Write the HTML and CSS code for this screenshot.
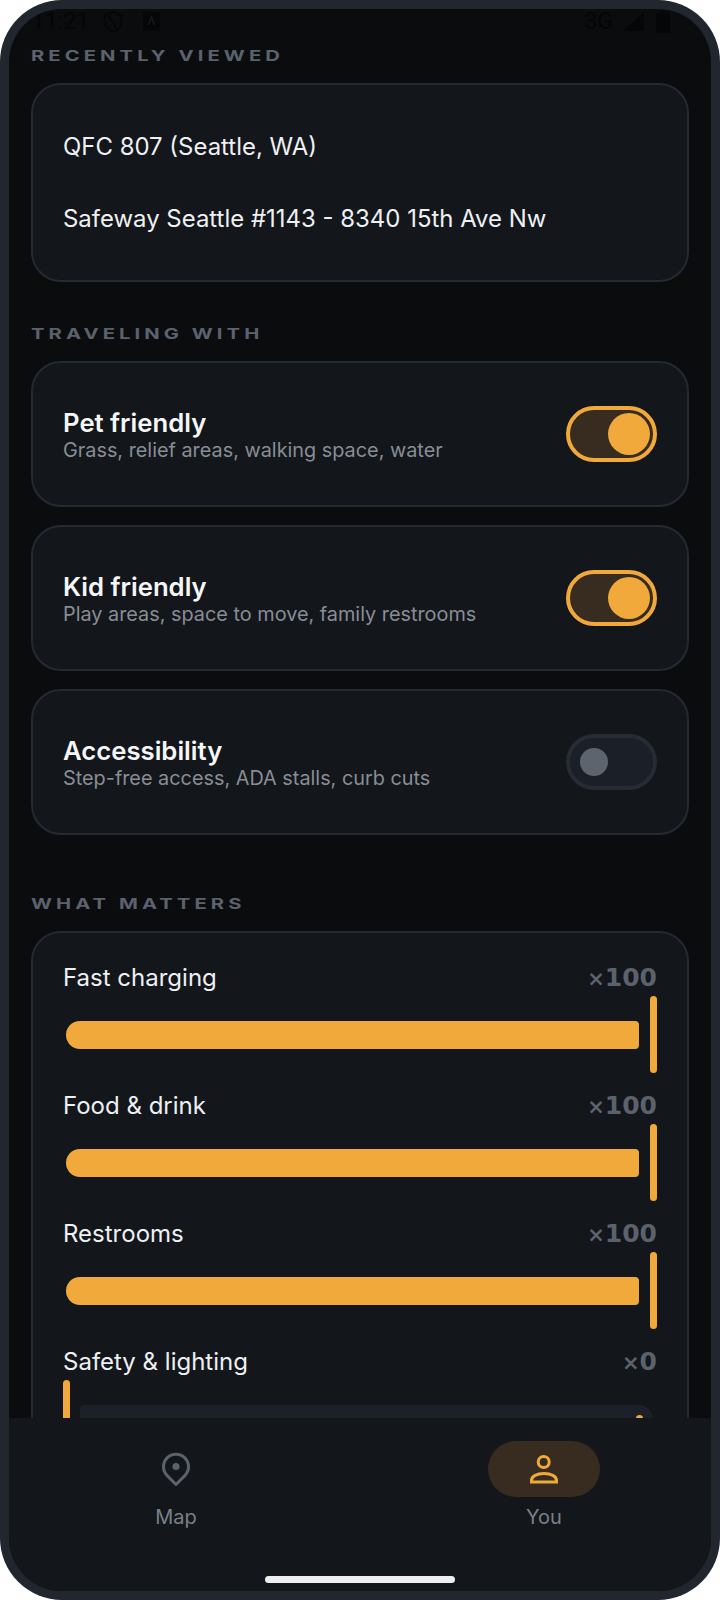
FILE: index.html
```html
<!DOCTYPE html>
<html lang="en">
<head>
  <meta charset="UTF-8">
  <title>You</title>
  <link rel="stylesheet" href="styles.css">
</head>
<body>
  <div class="phone">
    <div class="screen">
      <div class="status">
        <div class="status-left">
          <span>11:21</span>
          <svg width="20" height="22" viewBox="0 0 20 22" fill="none" stroke="#050607" stroke-width="1.6"><path d="M10 1 L18.5 4 V11 C18.5 15.5 14.5 19 10 21 C5.5 19 1.5 15.5 1.5 11 V4 Z"/><path d="M7 4 C4 9 15 11 11 17"/></svg>
          <svg class="status-gap" width="17" height="19" viewBox="0 0 17 19"><rect width="17" height="19" rx="1.5" fill="#050607"/><path d="M8.5 3 L12.5 13 H10.7 L8.5 7.5 L6.3 13 H4.5 Z" fill="#16181b"/></svg>
        </div>
        <div class="status-right">
          <span>3G</span>
          <svg width="21" height="19" viewBox="0 0 21 19"><path d="M21 0 V19 H0 Z" fill="#050607"/></svg>
          <svg class="status-gap" width="14" height="22" viewBox="0 0 14 22"><path d="M4 0 H10 V2 H14 V22 H0 V2 H4 Z" fill="#050607"/></svg>
        </div>
      </div>

      <div class="content">
        <h3 class="section first">RECENTLY VIEWED</h3>
        <div class="card recent">
          <div class="recent-item">QFC 807 (Seattle, WA)</div>
          <div class="recent-item">Safeway Seattle #1143 - 8340 15th Ave Nw</div>
        </div>

        <h3 class="section">TRAVELING WITH</h3>
        <div class="card option">
          <div>
            <div class="option-title">Pet friendly</div>
            <div class="option-sub">Grass, relief areas, walking space, water</div>
          </div>
          <div class="toggle on"><div class="knob"></div></div>
        </div>
        <div class="card option">
          <div>
            <div class="option-title">Kid friendly</div>
            <div class="option-sub">Play areas, space to move, family restrooms</div>
          </div>
          <div class="toggle on"><div class="knob"></div></div>
        </div>
        <div class="card option">
          <div>
            <div class="option-title">Accessibility</div>
            <div class="option-sub">Step-free access, ADA stalls, curb cuts</div>
          </div>
          <div class="toggle"><div class="knob"></div></div>
        </div>

        <h3 class="section matters">WHAT MATTERS</h3>
        <div class="card weights">
          <div class="weight">
            <div class="weight-head"><span>Fast charging</span><span class="weight-value"><small>×</small>100</span></div>
            <div class="slider full"><div class="fill"></div><div class="handle"></div></div>
          </div>
          <div class="weight">
            <div class="weight-head"><span>Food &amp; drink</span><span class="weight-value"><small>×</small>100</span></div>
            <div class="slider full"><div class="fill"></div><div class="handle"></div></div>
          </div>
          <div class="weight">
            <div class="weight-head"><span>Restrooms</span><span class="weight-value"><small>×</small>100</span></div>
            <div class="slider full"><div class="fill"></div><div class="handle"></div></div>
          </div>
          <div class="weight">
            <div class="weight-head"><span>Safety &amp; lighting</span><span class="weight-value"><small>×</small>0</span></div>
            <div class="slider empty"><div class="handle"></div><div class="track"><div class="stop"></div></div></div>
          </div>
        </div>
      </div>

      <div class="nav">
        <div class="nav-item">
          <div class="nav-icon">
            <svg width="30" height="36" viewBox="0 0 30 36" fill="none" stroke="#5c626b" stroke-width="3"><path d="M15 33.5 L6.2 24.6 A12.5 12.5 0 1 1 23.8 24.6 Z" stroke-linejoin="round"/><circle cx="15" cy="15.5" r="3.6" fill="#5c626b" stroke="none"/></svg>
          </div>
          <span>Map</span>
        </div>
        <div class="nav-item">
          <div class="nav-icon active">
            <svg width="30" height="36" viewBox="0 0 30 36" fill="none" stroke="#f2a93b" stroke-width="3"><circle cx="14.7" cy="11" r="5.5"/><path d="M2.5 31 V29.5 C2.5 25 8 22.5 15 22.5 C22 22.5 27.5 25 27.5 29.5 V31 Z"/></svg>
          </div>
          <span>You</span>
        </div>
        <div class="home-bar"></div>
      </div>
    </div>
  </div>
</body>
</html>
```

FILE: styles.css
```css
* {
  box-sizing: border-box;
}
body {
  margin: 0;
  background-color: #ffffff;
  font-family: Inter, "Noto Sans", sans-serif;
}
.phone {
  width: 720px;
  height: 1600px;
  padding: 9px;
  background-color: #22262e;
  border-radius: 62px;
}
.screen {
  position: relative;
  display: flex;
  flex-direction: column;
  height: 100%;
  background-color: #0b0c0e;
  border-radius: 53px;
  overflow: hidden;
}
.status {
  position: absolute;
  top: 0;
  left: 0;
  right: 0;
  display: flex;
  justify-content: space-between;
  align-items: center;
  height: 25px;
  padding: 0 41px 0 23px;
  color: #050607;
  font-size: 23px;
  font-family: Roboto, sans-serif;
}
.status-left, .status-right {
  display: flex;
  align-items: center;
  gap: 14px;
}
.status-right {
  gap: 10px;
}
.status-gap {
  margin-left: 6px;
}
.status-right .status-gap {
  margin-left: 2px;
}

.content {
  flex: 1;
  min-height: 0;
  overflow: hidden;
  padding: 36px 22px 0;
}
.section {
  margin: 41px 0 18px;
  height: 20px;
  color: #5b626d;
  font-size: 15px;
  font-weight: 700;
  line-height: 22px;
  letter-spacing: 3px;
  transform: scaleX(1.35);
  transform-origin: left;
}
.section.first {
  margin-top: 0;
}
.section.matters {
  margin-top: 58px;
}
.card {
  background-color: #13161b;
  border: 2px solid #252a32;
  border-radius: 30px;
}

.recent {
  height: 199px;
  padding: 26px 30px 0;
}
.recent-item {
  height: 72px;
  color: #eef0f2;
  font-size: 23.95px;
  line-height: 72px;
}

.option {
  display: flex;
  justify-content: space-between;
  align-items: center;
  height: 146px;
  margin-bottom: 18px;
  padding: 0 30px;
}
.option:last-of-type {
  margin-bottom: 0;
}
.option-title {
  margin-top: 2px;
  color: #f5f6f7;
  font-size: 25.7px;
  font-weight: 600;
  line-height: 30px;
}
.option-sub {
  color: #888d95;
  font-size: 19.85px;
  line-height: 24px;
}
.toggle {
  display: flex;
  align-items: center;
  width: 91px;
  height: 56px;
  padding-left: 10px;
  background-color: #1b1f27;
  border: 4px solid #262b34;
  border-radius: 28px;
}
.knob {
  width: 28px;
  height: 28px;
  background-color: #5e646e;
  border-radius: 50%;
}
.toggle.on {
  justify-content: flex-end;
  padding: 0 3px 0 0;
  background-color: #372c1f;
  border-color: #f2a93b;
}
.toggle.on .knob {
  width: 42px;
  height: 42px;
  background-color: #f2a93b;
}

.weights {
  padding: 28px 30px 60px;
}
.weight {
  margin-bottom: 16px;
}
.weight-head {
  display: flex;
  justify-content: space-between;
  align-items: center;
  height: 32px;
  margin-bottom: 3px;
  color: #eef0f2;
  font-size: 24px;
}
.weight-value {
  color: #5b626d;
  font-family: "DejaVu Sans", sans-serif;
  font-size: 25px;
  font-weight: 700;
}
.weight-value small {
  font-size: 21px;
}
.slider {
  display: flex;
  align-items: center;
  height: 77px;
}
.slider.full {
  gap: 11px;
  padding-left: 3px;
}
.slider.empty {
  gap: 10px;
  padding-right: 4px;
}
.fill, .track {
  position: relative;
  flex: 1;
  height: 28px;
  border-radius: 14px 4px 4px 14px;
  background-color: #f2a93b;
}
.track {
  border-radius: 4px 14px 14px 4px;
  background-color: #1c2028;
}
.stop {
  position: absolute;
  top: 10px;
  right: 10px;
  width: 7px;
  height: 7px;
  background-color: #f2a93b;
  border-radius: 50%;
}
.handle {
  width: 7px;
  height: 77px;
  background-color: #f2a93b;
  border-radius: 4px;
}

.nav {
  position: relative;
  display: flex;
  flex-shrink: 0;
  justify-content: space-between;
  height: 173px;
  padding: 23px 111px 0;
  background-color: #13161b;
}
.nav-item {
  display: flex;
  flex-direction: column;
  align-items: center;
  gap: 4px;
  color: #7a8088;
  font-size: 20px;
  line-height: 32px;
}
.nav-icon {
  display: flex;
  justify-content: center;
  align-items: center;
  width: 112px;
  height: 56px;
  border-radius: 28px;
}
.nav-icon.active {
  background-color: #372c1f;
}
.home-bar {
  position: absolute;
  bottom: 8px;
  left: 256px;
  width: 190px;
  height: 7px;
  background-color: #eeeeee;
  border-radius: 4px;
}
```
